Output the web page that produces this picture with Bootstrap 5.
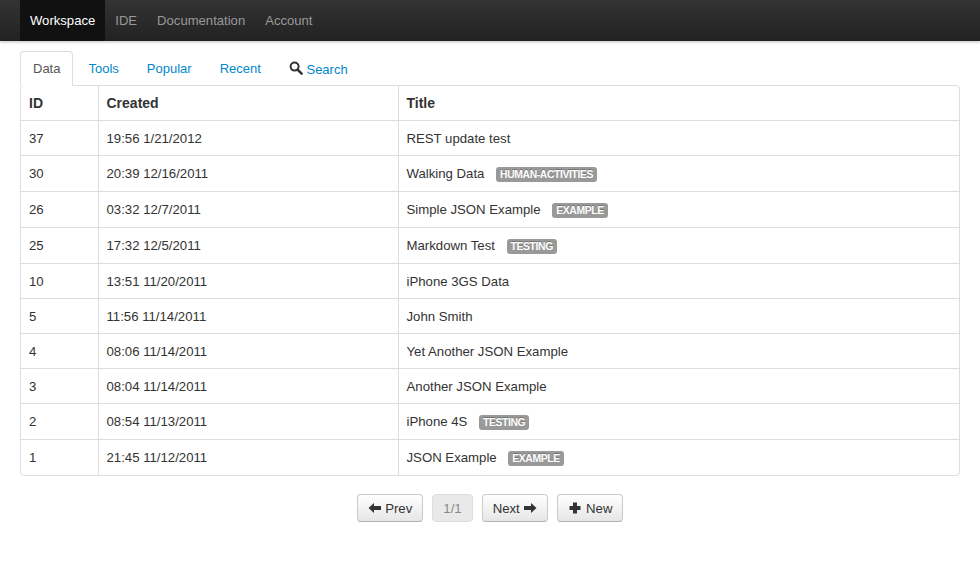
<!DOCTYPE html>
<html lang="en">
<head>
    <meta charset="UTF-8">
    <meta name="viewport" content="width=device-width, initial-scale=1.0">
    <title>Workspace</title>
    <link href="https://cdn.jsdelivr.net/npm/bootstrap@5.3.0/dist/css/bootstrap.min.css" rel="stylesheet">
    <style>
        body {
            background-color: #fff;
            color: #333;
            font-family: "Liberation Sans", Arial, sans-serif;
            font-size: 13.2px;
            line-height: 18px;
        }
        .top-bar {
            height: 41px;
            padding: 0 20px;
            background: linear-gradient(#333, #222);
            box-shadow: 0 1px 3px rgba(0, 0, 0, 0.25);
            align-items: stretch;
        }
        .top-bar .top-link {
            padding: 12px 10px 10px;
            font-size: 13.1px;
            color: #999;
            text-decoration: none;
        }
        .top-bar .top-link.current {
            color: #fff;
            background-color: #111;
        }
        .main-area {
            padding: 10px 20px 0;
        }
        .tab-row {
            height: 34px;
            border-bottom: 0;
            align-items: flex-end;
        }
        .tab-row .nav-link {
            height: 34px;
            padding: 8px 12px;
            margin-right: 2px;
            font-size: 13px;
            color: #08c;
            border: 1px solid transparent;
            border-radius: 4px 4px 0 0;
            line-height: 18px;
        }
        .tab-row .nav-link.active {
            color: #555;
            background: #fff;
            border-color: #ddd #ddd #fff;
            margin-bottom: -1px;
            height: 35px;
            position: relative;
        }
        .tab-row .search-link {
            padding: 9px 12px 0 12px;
            margin-right: 0;
        }
        .search-link svg {
            vertical-align: -1px;
        }
        .data-frame {
            border: 1px solid #ddd;
            border-radius: 4px;
            overflow: hidden;
        }
        .data-table {
            table-layout: fixed;
            margin: 0;
            color: #333;
            --bs-table-color: #333;
            --bs-table-striped-color: #333;
            --bs-table-striped-bg: #f9f9f9;
            --bs-table-border-color: #ddd;
        }
        .data-table th, .data-table td {
            padding: 9px 8px 7px;
            line-height: 18px;
            border-width: 1px 0 0 1px;
            border-color: #ddd;
            border-style: solid;
            box-shadow: none;
            vertical-align: top;
        }
        .data-table tr > :first-child {
            border-left: 0;
        }
        .data-table thead th {
            padding: 8px;
            border-top: 0;
            height: 34px;
            font-size: 14px;
            font-weight: bold;
        }
        .data-table tbody td {
            height: 35px;
        }
        .data-table tbody tr.tagged td {
            height: 36px;
        }
        .data-table tbody tr:last-child td {
            height: 35px;
        }
        .tag-label {
            display: inline-block;
            margin-left: 8px;
            padding: 2px 4px;
            font-size: 10.4px;
            line-height: 11px;
            letter-spacing: -0.4px;
            font-weight: bold;
            color: #fff;
            background-color: #999;
            border-radius: 3px;
            text-transform: uppercase;
            text-shadow: 0 -1px 0 rgba(0, 0, 0, 0.25);
        }
        .pager-row {
            padding-top: 18px;
            gap: 9px;
        }
        .pager-btn {
            height: 28px;
            padding: 5px 10px 3px;
            font-size: 13.2px;
            line-height: 18px;
            color: #333;
            background: linear-gradient(#fff, #e6e6e6);
            border: 1px solid #ccc;
            border-bottom-color: #b3b3b3;
            border-radius: 4px;
            box-shadow: inset 0 1px 0 rgba(255, 255, 255, 0.2), 0 1px 2px rgba(0, 0, 0, 0.05);
            white-space: nowrap;
        }
        .pager-btn.off {
            color: #888;
            background: #e9e9e9;
            border-color: #ddd;
            box-shadow: none;
            opacity: 1;
        }
        .pager-btn svg {
            vertical-align: -2px;
        }
    </style>
</head>
<body>

<nav class="d-flex top-bar">
    <a class="top-link current" href="#">Workspace</a>
    <a class="top-link" href="#">IDE</a>
    <a class="top-link" href="#">Documentation</a>
    <a class="top-link" href="#">Account</a>
</nav>

<div class="main-area">
    <ul class="nav tab-row">
        <li class="nav-item"><a class="nav-link active" href="#">Data</a></li>
        <li class="nav-item"><a class="nav-link" href="#">Tools</a></li>
        <li class="nav-item"><a class="nav-link" href="#">Popular</a></li>
        <li class="nav-item"><a class="nav-link" href="#">Recent</a></li>
        <li class="nav-item">
            <a class="nav-link search-link" href="#">
                <svg width="14" height="14" viewBox="0 0 14 14"><circle cx="5.6" cy="5.6" r="4" fill="none" stroke="#333" stroke-width="2"/><path d="M8.6 8.6L12.6 12.6" stroke="#333" stroke-width="2.6" stroke-linecap="round"/></svg>
                Search
            </a>
        </li>
    </ul>

    <div class="data-frame">
        <table class="table table-striped data-table">
            <colgroup>
                <col style="width: 77px">
                <col style="width: 300px">
                <col>
            </colgroup>
            <thead>
                <tr><th>ID</th><th>Created</th><th>Title</th></tr>
            </thead>
            <tbody>
                <tr><td>37</td><td>19:56 1/21/2012</td><td>REST update test</td></tr>
                <tr class="tagged"><td>30</td><td>20:39 12/16/2011</td><td>Walking Data <span class="tag-label">human-activities</span></td></tr>
                <tr class="tagged"><td>26</td><td>03:32 12/7/2011</td><td>Simple JSON Example <span class="tag-label">example</span></td></tr>
                <tr class="tagged"><td>25</td><td>17:32 12/5/2011</td><td>Markdown Test <span class="tag-label">testing</span></td></tr>
                <tr><td>10</td><td>13:51 11/20/2011</td><td>iPhone 3GS Data</td></tr>
                <tr><td>5</td><td>11:56 11/14/2011</td><td>John Smith</td></tr>
                <tr><td>4</td><td>08:06 11/14/2011</td><td>Yet Another JSON Example</td></tr>
                <tr><td>3</td><td>08:04 11/14/2011</td><td>Another JSON Example</td></tr>
                <tr class="tagged"><td>2</td><td>08:54 11/13/2011</td><td>iPhone 4S <span class="tag-label">testing</span></td></tr>
                <tr class="tagged"><td>1</td><td>21:45 11/12/2011</td><td>JSON Example <span class="tag-label">example</span></td></tr>
            </tbody>
        </table>
    </div>

    <div class="d-flex justify-content-center pager-row">
        <button class="btn pager-btn" type="button"><svg width="14" height="14" viewBox="0 0 14 14"><path d="M0.5 7L6 2V5H13V9H6V12Z" fill="#333"/></svg> Prev</button>
        <button class="btn pager-btn off" type="button" disabled>1/1</button>
        <button class="btn pager-btn" type="button">Next <svg width="14" height="14" viewBox="0 0 14 14"><path d="M13.5 7L8 2V5H1V9H8V12Z" fill="#333"/></svg></button>
        <button class="btn pager-btn" type="button"><svg width="14" height="14" viewBox="0 0 14 14"><path d="M5 1.5H9V5H12.5V9H9V12.5H5V9H1.5V5H5Z" fill="#333"/></svg> New</button>
    </div>
</div>

<script src="https://cdn.jsdelivr.net/npm/bootstrap@5.3.0/dist/js/bootstrap.bundle.min.js"></script>
</body>
</html>
